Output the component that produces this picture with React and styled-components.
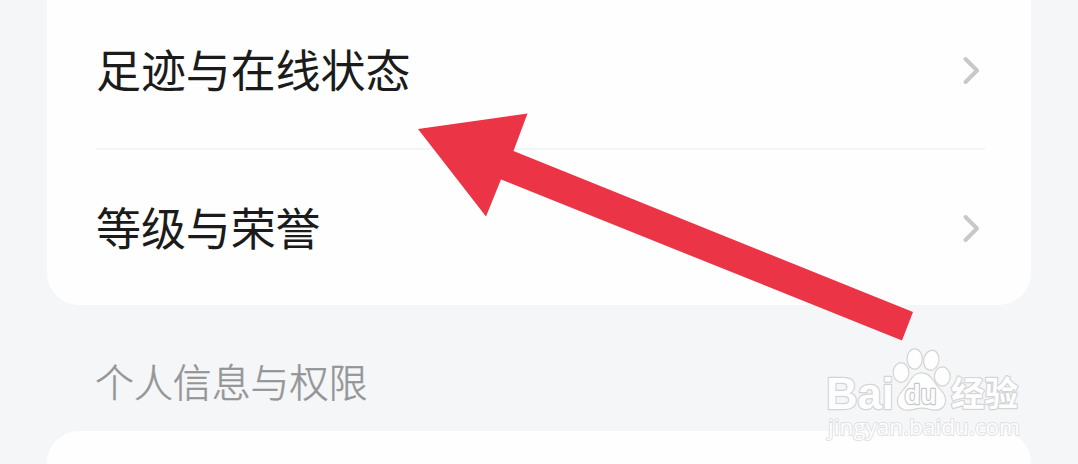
import React from "react";
import styled, { createGlobalStyle } from "styled-components";

const GlobalStyle = createGlobalStyle`
  body {
    margin: 0;
    background-color: #f5f6f8;
    font-family: "Liberation Sans", "Noto Sans CJK SC", sans-serif;
  }
`;
const Page = styled.main`
  position: relative;
  box-sizing: border-box;
  width: 1078px;
  height: 464px;
  padding: 0 47px;
  overflow: hidden;
  display: flex;
  flex-direction: column;
  background-color: #f5f6f8;
`;
const Card = styled.section`
  flex: none;
  box-sizing: border-box;
  height: ${({ $height }) => $height}px;
  padding: 0 46px 0 49px;
  background-color: #fefefe;
  border-radius: ${({ $radius }) => $radius};
`;
const Row = styled.div`
  box-sizing: border-box;
  height: ${({ $height }) => $height}px;
  padding-top: ${({ $top }) => $top}px;
  padding-right: 4px;
  display: flex;
  align-items: flex-start;
  justify-content: space-between;
  border-bottom: ${({ $divided }) => ($divided ? "2px solid #f4f4f4" : "none")};
`;
const Label = styled.div`
  font-family: "Noto Sans CJK SC", sans-serif;
  font-size: 45px;
  line-height: 60px;
  letter-spacing: -0.1px;
  color: #1b1b1b;
  white-space: nowrap;
`;
const Chevron = styled.svg`
  width: 20px;
  height: 60px;
  margin-top: 2px;
  fill: none;
  stroke: #c8c8c8;
  stroke-width: 4;
  stroke-linecap: round;
  stroke-linejoin: round;
`;
const SectionTitle = styled.h2`
  flex: none;
  box-sizing: border-box;
  height: 126px;
  margin: 0;
  padding: 45px 0 0 48px;
  font-family: "Noto Sans CJK SC", sans-serif;
  font-size: 39px;
  font-weight: 300;
  line-height: 60px;
  letter-spacing: -0.1px;
  color: #949597;
  -webkit-text-stroke: 0.5px #949597;
  white-space: nowrap;
`;
const Arrow = styled.svg`
  position: absolute;
  left: 418px;
  top: 113px;
  width: 496px;
  height: 229px;
  fill: #eb3547;
`;
const Watermark = styled.svg`
  position: absolute;
  left: 820px;
  top: 340px;
  width: 210px;
  height: 110px;
  fill: #fefefe;
  stroke: #d3d4d6;
  stroke-width: 2.4;
  stroke-linejoin: round;
  paint-order: stroke;
`;
const Brand = styled.text`
  font-family: "Liberation Sans", sans-serif;
  font-size: 44px;
  font-weight: 700;
`;
const BrandInner = styled.text`
  font-family: "Liberation Sans", sans-serif;
  font-size: 28px;
  font-weight: 700;
  stroke: #c6c7c9;
`;
const BrandSuffix = styled.text`
  font-family: "Noto Sans CJK SC", sans-serif;
  font-size: 34px;
  font-weight: 700;
`;
const Address = styled.text`
  font-family: "Open Sans", sans-serif;
  font-size: 22px;
  font-weight: 500;
  stroke: #dfe0e2;
  stroke-width: 1.8;
`;

const SettingRow = ({ label, height, top, divided }) => (
  <Row $height={height} $top={top} $divided={divided}>
    <Label>{label}</Label>
    <Chevron viewBox="0 0 20 60">
      <path d="M4.5 18 16 29.5 4.5 41" />
    </Chevron>
  </Row>
);

const BaiduMark = () => (
  <Watermark viewBox="0 0 210 110">
    <Brand x="6" y="68.5" textLength="68" lengthAdjust="spacingAndGlyphs">
      Bai
    </Brand>
    <ellipse cx="81" cy="32.5" rx="7.2" ry="9.3" />
    <ellipse cx="94.7" cy="19" rx="7" ry="9.5" />
    <ellipse cx="111.3" cy="20.3" rx="7" ry="9.5" transform="rotate(12 111.3 20.3)" />
    <ellipse cx="122.3" cy="36.5" rx="7.3" ry="9" />
    <path d="M101.5 33.5C94 33.5 92 39 88 45C84 51 78 54 78 61C78 67 83 70 89 69.5C94 69 98 67.5 102 67.5C107 67.5 110 69.5 115 69.5C121 69.5 125 66 125 60C125 53 119 50 115 44C111 38 108 33.5 101.5 33.5Z" />
    <BrandInner x="84.5" y="64" textLength="32" lengthAdjust="spacingAndGlyphs">
      du
    </BrandInner>
    <BrandSuffix x="131" y="66" textLength="67" lengthAdjust="spacingAndGlyphs">
      经验
    </BrandSuffix>
    <Address x="8" y="94.5" textLength="192" lengthAdjust="spacingAndGlyphs">
      jingyan.baidu.com
    </Address>
  </Watermark>
);

const App = () => (
  <>
    <GlobalStyle />
    <Page>
      <Card $height={305} $radius="0 0 32px 32px">
        <SettingRow label="足迹与在线状态" height={150} top={39} divided />
        <SettingRow label="等级与荣誉" height={155} top={47} />
      </Card>
      <SectionTitle>个人信息与权限</SectionTitle>
      <Card $height={80} $radius="32px 32px 0 0" />
      <Arrow viewBox="418 113 496 229">
        <polygon points="418,129 527.5,113.5 513.5,151 913,312 902,340.5 501,179.5 486,216.5" />
      </Arrow>
      <BaiduMark />
    </Page>
  </>
);

export default App;
